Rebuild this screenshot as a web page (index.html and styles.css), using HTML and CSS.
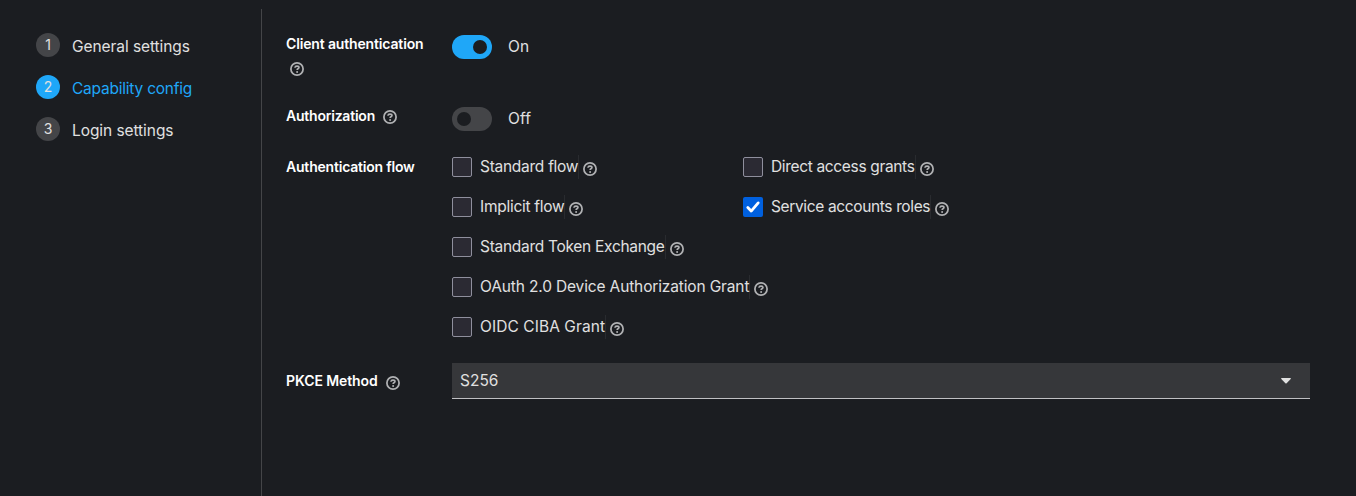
FILE: index.html
```html
<!DOCTYPE html>
<html lang="en">
<head>
<meta charset="utf-8">
<title>Capability config</title>
<link rel="stylesheet" href="styles.css">
</head>
<body>
<svg class="defs" width="0" height="0" aria-hidden="true">
  <symbol id="help" viewBox="0 0 14 14">
    <circle cx="7" cy="7" r="6.100" fill="none" stroke="currentColor" stroke-width="1.750"/>
    <path d="M4.900 5.700C5 4.500 5.900 4.100 7 4.100c1.200 0 2 .6 2 1.500 0 1.200-1.900 1.150-1.900 2.300" fill="none" stroke="currentColor" stroke-width="1.600"/>
    <circle cx="7.100" cy="9.900" r="1" fill="currentColor"/>
  </symbol>
</svg>
<div class="wizard">
  <nav class="steps">
    <a class="step"><span class="num">1</span><span class="name w1">General settings</span></a>
    <a class="step current"><span class="num">2</span><span class="name w2">Capability config</span></a>
    <a class="step"><span class="num">3</span><span class="name w3">Login settings</span></a>
  </nav>
  <form class="form">
    <div class="group auth">
      <div class="label"><span class="l1">Client authentication</span><svg class="help"><use href="#help"/></svg></div>
      <div class="switch-row"><span class="switch on"></span><span class="state">On</span></div>
    </div>
    <div class="group authz">
      <div class="label"><span class="l2">Authorization</span><svg class="help"><use href="#help"/></svg></div>
      <div class="switch-row"><span class="switch"></span><span class="state">Off</span></div>
    </div>
    <div class="group flow">
      <div class="label"><span class="l3">Authentication flow</span></div>
      <div class="checks">
        <div class="check"><span class="box"></span><span class="text c1">Standard flow</span><svg class="help"><use href="#help"/></svg></div>
        <div class="check"><span class="box"></span><span class="text c2">Direct access grants</span><svg class="help"><use href="#help"/></svg></div>
        <div class="check"><span class="box"></span><span class="text c3">Implicit flow</span><svg class="help"><use href="#help"/></svg></div>
        <div class="check"><span class="box checked"><svg width="20" height="20" viewBox="0 0 20 20"><path d="M4.800 10.600l3.400 3.500 7-8.200" fill="none" stroke="#fff" stroke-width="2.800" stroke-linecap="round" stroke-linejoin="round"/></svg></span><span class="text c4">Service accounts roles</span><svg class="help"><use href="#help"/></svg></div>
        <div class="check wide"><span class="box"></span><span class="text c5">Standard Token Exchange</span><svg class="help"><use href="#help"/></svg></div>
        <div class="check wide"><span class="box"></span><span class="text c6">OAuth 2.0 Device Authorization Grant</span><svg class="help"><use href="#help"/></svg></div>
        <div class="check wide"><span class="box"></span><span class="text c7">OIDC CIBA Grant</span><svg class="help"><use href="#help"/></svg></div>
      </div>
    </div>
    <div class="group pkce">
      <div class="label"><span class="l4">PKCE Method</span><svg class="help"><use href="#help"/></svg></div>
      <div class="select"><span class="value">S256</span><svg class="caret" width="10" height="6" viewBox="0 0 10 6"><path d="M.6 0h8.800q.8.200.3.900L5.600 5.200q-.6.500-1.200 0L.3.900Q-.2.200.6 0z" fill="#e0e0e0"/></svg></div>
    </div>
  </form>
</div>
</body>
</html>
```
FILE: styles.css
```css
* { box-sizing: border-box; }
body { margin: 0; background: #1b1d21; color: #e0e0e0; font: 16px/24px Inter, sans-serif; }
.defs { display: block; height: 0; }
.wizard { display: flex; height: 496px; padding-top: 9px; overflow: hidden; }
.steps { width: 262px; border-right: 1px solid #444548; padding: 24px 0 0 36px; display: flex; flex-direction: column; gap: 18px; }
.step { display: flex; gap: 12px; height: 24px; white-space: nowrap; font-size: 15.5px; }
.num { width: 24px; height: 24px; border-radius: 50%; background: #444548; text-align: center; font-size: 14px; line-height: 24px; }
.name { padding-top: 2px; }
.w1, .w3 { letter-spacing: -.07px; }
.w2 { letter-spacing: -.22px; }
.current .num { background: #1fa7f8; }
.current .name { color: #1fa7f8; }
.form { flex: 1; padding: 23px 46px 0 24px; }
.group { display: grid; grid-template-columns: 166px 1fr; }
.auth { height: 72px; padding-top: 3px; }
.authz { height: 51px; padding-top: 3px; }
.flow { height: 208px; }
.label { font-size: 14px; font-weight: 600; color: #fff; white-space: nowrap; }
.label span { display: inline-block; vertical-align: top; }
.l1 { letter-spacing: -.15px; }
.l2 { letter-spacing: -.22px; }
.l3 { letter-spacing: -.2px; }
.l4 { letter-spacing: -.09px; }
.auth .label, .authz .label { margin-top: -3px; }
.auth .label { white-space: normal; width: 142px; }
.help { width: 14px; height: 14px; color: #b0b1b3; flex: none; }
.label .help { margin: 6px 0 0 8px; vertical-align: top; }
.auth .label .help { margin-left: 4px; }
.switch-row { display: flex; gap: 16px; height: 24px; font-size: 15.5px; }
.state { letter-spacing: .1px; }
.switch { width: 40px; height: 24px; border-radius: 12px; background: #444548; padding: 5px; }
.switch::before { content: ""; display: block; width: 14px; height: 14px; border-radius: 50%; background: #1b1d21; }
.switch.on { background: #1fa7f8; }
.switch.on::before { margin-left: 16px; }
.checks { display: grid; grid-template-columns: 291px 1fr; grid-auto-rows: 24px; row-gap: 16px; }
.check { display: flex; font-size: 15.5px; white-space: nowrap; }
.wide { grid-column: 1 / -1; }
.box { width: 20px; height: 20px; margin: 2px 8px 0 0; border: 1px solid #8f8f9d; border-radius: 2px; background: #2b2a33; flex: none; }
.checked { border: 0; background: #0060df; }
.checked svg { display: block; }
.text { border-right: 1px solid #292b2f; }
.c1, .c3 { letter-spacing: -.27px; }
.c2 { letter-spacing: -.34px; }
.c4 { letter-spacing: -.36px; }
.c5 { letter-spacing: -.29px; }
.c6 { letter-spacing: -.145px; }
.c7 { letter-spacing: .08px; }
.check .help { margin: 7px 0 0 4px; }
.pkce .label { padding-top: 6px; }
.pkce .label .help { margin-top: 7px; }
.select { height: 36px; background: #36373a; border-bottom: 1px solid #c0c0c3; padding: 0 19px 0 8px; display: flex; justify-content: space-between; align-items: center; font-size: 15.5px; }
```
